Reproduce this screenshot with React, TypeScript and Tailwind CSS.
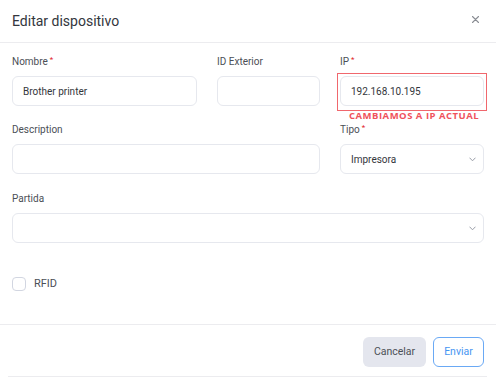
import React from "react";

function Label({ text, req }: { text: string; req?: boolean }) {
  return (
    <div className="text-[10px] leading-[12px] text-[#4b4f56] h-[12px] mb-[8px] whitespace-nowrap">
      {text}
      {req && <span className="text-[#e11d2a] text-[8px] ml-[2px] relative top-[-3px]">*</span>}
    </div>
  );
}

function Chevron() {
  return (
    <svg width="7" height="5" viewBox="0 0 7 5" fill="none">
      <path d="M0.8 1 L3.5 3.8 L6.2 1" stroke="#9a9ea8" strokeWidth="1" strokeLinecap="round" strokeLinejoin="round" />
    </svg>
  );
}

export default function App() {
  const inputCls =
    "h-[30px] rounded-[6px] border border-[#e6e8ee] bg-white flex items-center pl-[10px] pr-[7px] text-[10px] text-[#33363b]";
  return (
    <div className="w-[496px] h-[378px] bg-white relative overflow-hidden" style={{ fontFamily: "Roboto, sans-serif" }}>
      {/* Header */}
      <div className="h-[43px] border-b border-[#ececef] flex items-center justify-between pl-[12px] pr-[17px]">
        <div className="text-[14px] text-[#33363d] leading-[16px]">Editar dispositivo</div>
        <svg width="7" height="7" viewBox="0 0 7 7" className="mt-[-4px]">
          <path d="M0.5 0.5 L6.5 6.5 M6.5 0.5 L0.5 6.5" stroke="#8a8d94" strokeWidth="1.1" strokeLinecap="round" />
        </svg>
      </div>

      {/* Body */}
      <div className="pl-[12px] pr-[12px] pt-[13px]">
        <div className="grid grid-cols-[185px_103px_144px] gap-x-[20px]">
          <div>
            <Label text="Nombre" req />
            <div className={inputCls}>Brother printer</div>
          </div>
          <div>
            <Label text="ID Exterior" />
            <div className={inputCls}></div>
          </div>
          <div>
            <Label text="IP" req />
            <div className="relative">
              <div className="absolute left-[-3px] top-[-3px] w-[150px] h-[38px] border border-[#f0676d] pointer-events-none" />
              <div className={inputCls}>192.168.10.195</div>
            </div>
            <div
              className="text-[9.5px] font-bold text-[#f0525c] tracking-[0.5px] mt-[4px] ml-[9px] leading-[12px] whitespace-nowrap"
              style={{ fontFamily: "'Open Sans', sans-serif" }}
            >
              CAMBIAMOS A IP ACTUAL
            </div>
          </div>
        </div>

        <div className="grid grid-cols-[308px_144px] gap-x-[20px] mt-[2px]">
          <div>
            <Label text="Description" />
            <div className={inputCls}></div>
          </div>
          <div>
            <Label text="Tipo" req />
            <div className={inputCls + " justify-between"}>
              <span>Impresora</span>
              <Chevron />
            </div>
          </div>
        </div>

        <div className="mt-[19px] w-[472px]">
          <Label text="Partida" />
          <div className={inputCls + " justify-end"}>
            <Chevron />
          </div>
        </div>

        <div className="flex items-center mt-[34px]">
          <div className="w-[14px] h-[14px] rounded-[4px] border-[1.5px] border-[#d2d6e1] bg-white" />
          <span className="ml-[8px] text-[11px] leading-[14px] text-[#4b4f56]">RFID</span>
        </div>
      </div>

      {/* Footer */}
      <div className="absolute left-0 right-0 top-[324px] border-t border-[#ececef]">
        <div className="flex justify-end pr-[12px] pt-[12px] gap-[7px]">
          <button className="h-[30px] w-[63px] rounded-[6px] bg-[#e4e6ee] text-[10.5px] text-[#4b4f56]">Cancelar</button>
          <button className="h-[30px] w-[51px] rounded-[6px] border border-[#6aa9f5] bg-white text-[10.5px] text-[#4796f2]">Enviar</button>
        </div>
      </div>
      <div className="absolute left-[8px] w-[479px] top-[376px] border-t border-[#ececef]" />
    </div>
  );
}
